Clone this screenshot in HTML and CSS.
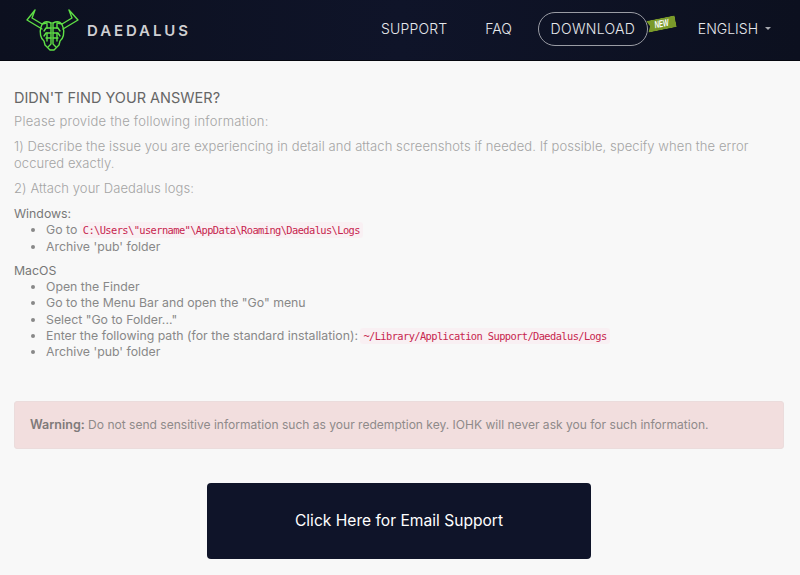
FILE: index.html
```html
<!DOCTYPE html>
<html lang="en">
<head>
<meta charset="utf-8">
<title>Daedalus Support</title>
<link rel="stylesheet" href="styles.css">
</head>
<body>
<header class="topbar">
  <a class="brand" href="#">
    <svg class="logo" viewBox="0 0 56 44" width="56" height="44" fill="none" stroke="#5fe046" stroke-width="1.4" stroke-linejoin="round" stroke-linecap="round">
      <path d="M10 2 L2 12 L17 21 M10 2 L7 10 L17 16 L22 15"/>
      <path d="M44 2 L53 12 L38 21 M44 2 L47 10 L37 16 L32 15"/>
      <path d="M26 15 C20 12 17 15 16 19 C14 25 16 31 19 33 L20 37 L25 42 L29 42 L34 37 L35 33 C38 31 40 25 38 19 C37 15 34 12 28 15"/>
      <path d="M26 15 V36 M28 15 V36 M26 36 L23 39 M28 36 L31 39"/>
      <path d="M26 20 H21 L19 23 M26 25 H21 L19 28 M26 30 H21 M28 20 H33 L35 23 M28 25 H33 L35 28 M28 30 H33"/>
      <path d="M22 16 V20 M32 16 V20 M22 25 V33 M32 25 V33"/>
    </svg>
    <span class="brand-name">DAEDALUS</span>
  </a>
  <nav class="nav">
    <a class="nav-link nav-support" href="#">SUPPORT</a>
    <a class="nav-link nav-faq" href="#">FAQ</a>
    <span class="download-wrap">
      <a class="nav-link pill" href="#">DOWNLOAD</a>
      <span class="flag"><span class="flag-text">NEW</span></span>
    </span>
    <a class="nav-link nav-lang" href="#">ENGLISH<span class="caret"></span></a>
  </nav>
</header>
<main class="content">
  <h2 class="title">DIDN'T FIND YOUR ANSWER?</h2>
  <p class="lead lead-short">Please provide the following information:</p>
  <p class="lead">1) Describe the issue you are experiencing in detail and attach screenshots if needed. If possible, specify when the error occured exactly.</p>
  <p class="lead lead-last">2) Attach your Daedalus logs:</p>
  <div class="os">
    <div class="os-name">Windows:</div>
    <ul class="steps">
      <li>Go to <code class="path">C:\Users\"username"\AppData\Roaming\Daedalus\Logs</code></li>
      <li>Archive 'pub' folder</li>
    </ul>
  </div>
  <div class="os">
    <div class="os-name">MacOS</div>
    <ul class="steps">
      <li>Open the Finder</li>
      <li>Go to the Menu Bar and open the "Go" menu</li>
      <li>Select "Go to Folder..."</li>
      <li>Enter the following path (for the standard installation): <code class="path">~/Library/Application Support/Daedalus/Logs</code></li>
      <li>Archive 'pub' folder</li>
    </ul>
  </div>
  <div class="alert"><strong>Warning:</strong> Do not send sensitive information such as your redemption key. IOHK will never ask you for such information.</div>
  <a class="email-btn" href="#">Click Here for Email Support</a>
</main>
</body>
</html>
```
FILE: styles.css
```css
* { box-sizing: border-box; }
html, body { margin: 0; padding: 0; }
body {
  width: 800px;
  height: 575px;
  overflow: hidden;
  background: #f8f8f8;
  font-family: Inter, "Open Sans", sans-serif;
  font-size: 13px;
  color: #888;
}
a { text-decoration: none; color: inherit; }
.topbar {
  height: 61px;
  display: flex;
  align-items: center;
  justify-content: space-between;
  background: linear-gradient(90deg, #0c101f 0%, #0f1429 50%, #0c101f 100%);
  border-bottom: 1px solid #05070f;
  padding: 0 0 0 25px;
}
.brand { display: flex; align-items: center; gap: 6px; }
.logo { display: block; }
.brand-name {
  font-size: 15px;
  font-weight: 600;
  letter-spacing: 2.9px;
  color: #cfcfd2;
}
.nav { display: flex; align-items: center; padding-right: 29px; margin-bottom: 3px; }
.nav-link { color: #e6e8ec; font-size: 14px; font-weight: 300; }
.nav-support { margin-right: 38px; letter-spacing: 0.15px; }
.nav-faq { margin-right: 26px; }
.download-wrap { display: flex; align-items: center; margin-right: 22px; }
.pill {
  display: flex;
  align-items: center;
  justify-content: center;
  width: 110px;
  height: 34px;
  border: 1px solid #9a9ca4;
  border-radius: 17px;
  letter-spacing: 0.3px;
}
.flag {
  width: 29px;
  height: 12px;
  margin: 0 0 9px -1px;
  background: #7a9a2a;
  color: #fff;
  font-family: "Liberation Sans", sans-serif;
  font-size: 10px;
  font-weight: 700;
  font-style: italic;
  line-height: 12px;
  text-align: center;
  transform: rotate(-11deg);
  clip-path: polygon(0 0, 100% 0, 100% 100%, 0 100%, 10% 50%);
}
.flag-text { display: inline-block; transform: scaleX(0.62); }
.nav-lang { display: flex; align-items: center; }
.caret {
  width: 0;
  height: 0;
  margin-left: 7px;
  border-left: 3px solid transparent;
  border-right: 3px solid transparent;
  border-top: 3px solid #a8aab0;
}
.content { padding: 28px 16px 0 14px; }
.title {
  margin: 0 0 7px;
  font-size: 14.5px;
  line-height: 17px;
  font-weight: 400;
  color: #666;
}
.lead {
  margin: 0 0 8px;
  line-height: 17px;
  color: #a4a4a4;
  font-weight: 300;
  letter-spacing: 0.08px;
}
.lead-short { letter-spacing: 0.22px; }
.lead-last { margin-bottom: 9px; }
.os { margin-bottom: 8px; font-size: 12.3px; line-height: 16.3px; }
.os-name { color: #777; }
.steps { margin: 0; padding: 0 0 0 32px; }
.path {
  padding: 2px 3px;
  margin-left: -1px;
  border-radius: 3px;
  background: #f9f0f3;
  color: #c7254e;
  font-family: "DejaVu Sans Mono", monospace;
  font-size: 10.4px;
  line-height: 1;
  letter-spacing: -0.6px;
}
.alert {
  margin-top: 40px;
  height: 48px;
  padding: 15px;
  line-height: 16px;
  font-size: 12.05px;
  background: #f2dede;
  border: 1px solid #ebdcdc;
  border-radius: 3px;
  color: #8f8a8a;
}
.alert strong { font-weight: 600; color: #7f7a7a; font-size: 12.5px; }
.email-btn {
  display: flex;
  align-items: center;
  justify-content: center;
  width: 384px;
  height: 76px;
  margin: 34px auto 0 193px;
  background: #0f1429;
  border-radius: 4px;
  color: #fff;
  font-size: 15.6px;
}
```
